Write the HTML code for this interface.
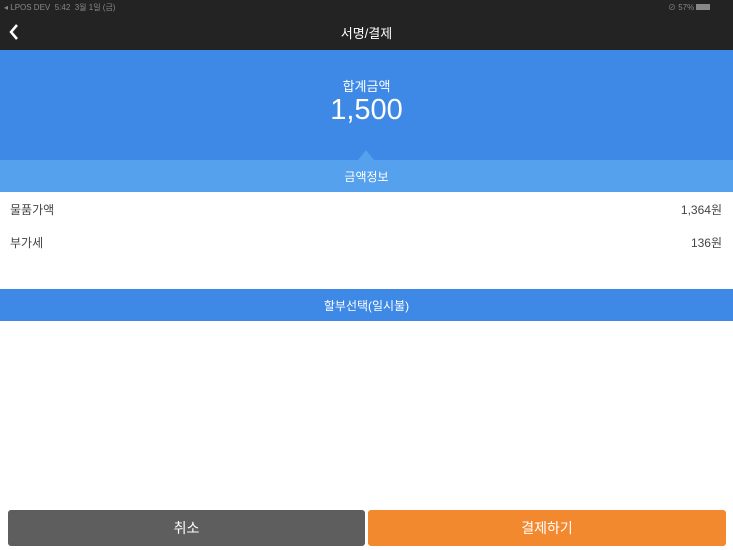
<!DOCTYPE html>
<html><head><meta charset="utf-8"><style>
body{margin:0;width:733px;height:550px;position:relative;background:#fff;font-family:"Liberation Sans","Noto Sans CJK KR",sans-serif;overflow:hidden}
div{position:absolute;box-sizing:border-box}
.c{left:0;width:733px;text-align:center;color:#fff}
</style></head><body>
<div style="left:0;top:0;width:733px;height:50px;background:#232323"></div>
<div style="left:4px;top:2px;font-size:8px;color:#888">◂ LPOS DEV &nbsp;5:42 &nbsp;3월 1일 (금)</div>
<div style="left:668px;top:2px;font-size:8px;color:#888">⊘ 57% <span style="display:inline-block;width:14px;height:6px;background:#888"></span></div>
<svg style="position:absolute;left:8px;top:23px" width="12" height="18"><path d="M9 2 L3 9 L9 16" stroke="#fff" stroke-width="2.5" fill="none"/></svg>
<div class="c" style="top:23px;font-size:13px">서명/결제</div>
<div style="left:0;top:50px;width:733px;height:110px;background:#3e88e6"></div>
<div class="c" style="top:76px;font-size:13px">합계금액</div>
<div class="c" style="top:94px;font-size:29px">1,500</div>
<div style="left:0;top:160px;width:733px;height:32px;background:#56a1ee"></div>
<div style="left:358px;top:150px;width:0;height:0;border-left:8px solid transparent;border-right:8px solid transparent;border-bottom:10px solid #56a1ee"></div>
<div class="c" style="top:168px;font-size:12px">금액정보</div>
<div style="left:10px;top:201px;font-size:12px;color:#444">물품가액</div>
<div style="right:11px;top:201px;font-size:12px;color:#444">1,364원</div>
<div style="left:10px;top:234px;font-size:12px;color:#444">부가세</div>
<div style="right:11px;top:234px;font-size:12px;color:#444">136원</div>
<div style="left:0;top:289px;width:733px;height:32px;background:#3e88e6"></div>
<div class="c" style="top:297px;font-size:12px">할부선택(일시불)</div>
<div style="left:8px;top:510px;width:357px;height:36px;background:#5e5e5e;border-radius:3px;color:#fff;text-align:center;line-height:36px;font-size:14px">취소</div>
<div style="left:368px;top:510px;width:358px;height:36px;background:#f3892f;border-radius:3px;color:#fff;text-align:center;line-height:36px;font-size:14px">결제하기</div>
</body></html>
